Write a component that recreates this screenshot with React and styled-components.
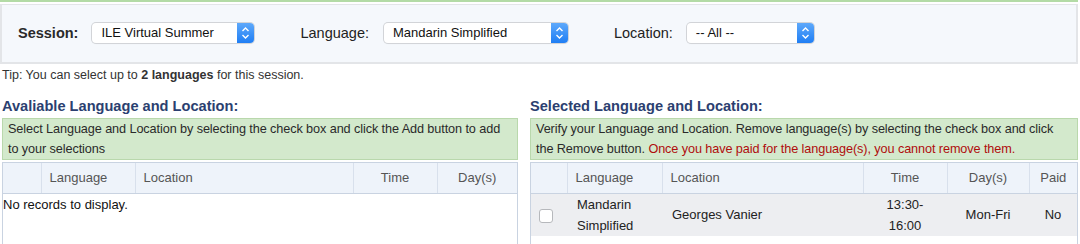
import React from "react";
import styled, { createGlobalStyle } from "styled-components";

const GlobalStyle = createGlobalStyle`
  html, body { margin: 0; padding: 0; background: #fff; }
  body { font-family: "Liberation Sans", Arial, Helvetica, sans-serif; color: #222; }
  * { box-sizing: border-box; }
`;

const Page = styled.div`
  width: 1080px;
  padding: 0 2px 0 0;
`;

const TopRule = styled.div`
  height: 2px;
  background: #b3dba6;
  margin-bottom: 2px;
`;

const FilterPanel = styled.div`
  height: 60px;
  border: 2px solid #e3e5e8;
  border-top-width: 1px;
  background: #f5f8fc;
  display: flex;
  align-items: center;
  padding: 0 0 2px 16px;
  gap: 46px;
`;

const Field = styled.div`
  display: flex;
  align-items: center;
  gap: ${(p) => p.$gap || 14}px;
`;

const Label = styled.label`
  font-size: 14.5px;
  font-weight: ${(p) => (p.$bold ? 700 : 400)};
  color: ${(p) => (p.$bold ? "#2a2a2a" : "#222")};
`;

const SelectBox = styled.div`
  display: flex;
  width: ${(p) => p.$w}px;
  height: 20px;
  border-radius: 4px;
  background: #fff;
  box-shadow: 0 0 0 1px #d2d4d8, 0 1px 1px rgba(0,0,0,0.08);
`;

const SelectText = styled.div`
  flex: 1;
  font-size: 13px;
  line-height: 20px;
  padding-left: 9px;
  color: #111;
  white-space: nowrap;
  overflow: hidden;
`;

const Arrow = styled.div`
  width: 17px;
  border-radius: 0 4px 4px 0;
  background: linear-gradient(#5ea9fb, #1f7ef4);
  display: flex;
  align-items: center;
  justify-content: center;
`;

const Tip = styled.p`
  margin: 0;
  padding: 4px 0 0 2px;
  font-size: 12.5px;
  line-height: 14px;
  color: #333;
  b { color: #333; }
`;

const Columns = styled.div`
  display: grid;
  grid-template-columns: 516px 548px;
  gap: 12px;
  padding: 16px 0 0 2px;
`;

const Section = styled.section`
  display: flex;
  flex-direction: column;
`;

const Heading = styled.h2`
  margin: 0 0 3px 0;
  font-size: 14.6px;
  line-height: 17px;
  font-weight: 700;
  color: #2c3f70;
`;

const Notice = styled.div`
  background: #d3e9cc;
  border: 1px solid #b9d8ac;
  padding: 0 5px;
  font-size: 12.7px;
  letter-spacing: -0.1px;
  line-height: 20px;
  color: #2a2a2a;
  height: 42px;
`;

const Warn = styled.span`
  color: #b00d0d;
`;

const TableWrap = styled.div`
  margin-top: 2px;
  border: 1px solid #c9d3e1;
  border-bottom: none;
  min-height: 120px;
  background: #fff;
`;

const Table = styled.table`
  width: 100%;
  border-collapse: collapse;
  table-layout: fixed;
  font-size: 13px;
`;

const Th = styled.th`
  height: 30px;
  background: #eef3fa;
  border-bottom: 1px solid #c9d3e1;
  border-left: 1px solid #d8e0ec;
  font-weight: 400;
  color: #555;
  text-align: ${(p) => p.$align || "left"};
  padding: 0 ${(p) => (p.$align === "center" ? 0 : 8)}px;
  &:first-child { border-left: none; }
`;

const Empty = styled.td`
  padding: 3px 0 0 0;
  font-size: 13px;
  color: #111;
  vertical-align: top;
`;

const Tr = styled.tr`
  background: ${(p) => (p.$shaded ? "#edeef1" : "#fff")};
`;

const Td = styled.td`
  height: 42px;
  padding: 0 ${(p) => (p.$align === "center" ? 0 : 10)}px;
  text-align: ${(p) => p.$align || "left"};
  color: #222;
  line-height: 21px;
  vertical-align: middle;
`;

const Check = styled.input.attrs({ type: "checkbox" })`
  appearance: none;
  width: 14px;
  height: 14px;
  margin: 3px 0 0 -2px;
  border: 1px solid #b6b8bc;
  border-radius: 3px;
  background: #fff;
  display: block;
`;

function Chevrons() {
  return (
    <svg width="9" height="14" viewBox="0 0 9 14">
      <path d="M1.5 5 L4.5 2 L7.5 5" fill="none" stroke="#fff" strokeWidth="1.4" />
      <path d="M1.5 9 L4.5 12 L7.5 9" fill="none" stroke="#fff" strokeWidth="1.4" />
    </svg>
  );
}

function Select({ width, value }) {
  return (
    <SelectBox $w={width}>
      <SelectText>{value}</SelectText>
      <Arrow>
        <Chevrons />
      </Arrow>
    </SelectBox>
  );
}

export default function App() {
  return (
    <Page>
      <GlobalStyle />
      <TopRule />
      <FilterPanel>
        <Field $gap={14}>
          <Label $bold>Session:</Label>
          <Select width={162} value="ILE Virtual Summer" />
        </Field>
        <Field $gap={15}>
          <Label>Language:</Label>
          <Select width={184} value="Mandarin Simplified" />
        </Field>
        <Field $gap={14}>
          <Label>Location:</Label>
          <Select width={127} value="-- All --" />
        </Field>
      </FilterPanel>
      <Tip>
        Tip: You can select up to <b>2 languages</b> for this session.
      </Tip>
      <Columns>
        <Section>
          <Heading>Avaliable Language and Location:</Heading>
          <Notice>
            Select Language and Location by selecting the check box and click the Add button to add to your selections
          </Notice>
          <TableWrap>
            <Table>
              <colgroup>
                <col style={{ width: 38 }} />
                <col style={{ width: 94 }} />
                <col style={{ width: 218 }} />
                <col style={{ width: 84 }} />
                <col />
              </colgroup>
              <thead>
                <tr>
                  <Th />
                  <Th>Language</Th>
                  <Th>Location</Th>
                  <Th $align="center">Time</Th>
                  <Th $align="center">Day(s)</Th>
                </tr>
              </thead>
              <tbody>
                <tr>
                  <Empty colSpan={5}>No records to display.</Empty>
                </tr>
              </tbody>
            </Table>
          </TableWrap>
        </Section>
        <Section>
          <Heading>Selected Language and Location:</Heading>
          <Notice>
            Verify your Language and Location. Remove language(s) by selecting the check box and click the Remove button.{" "}
            <Warn>Once you have paid for the language(s), you cannot remove them.</Warn>
          </Notice>
          <TableWrap>
            <Table>
              <colgroup>
                <col style={{ width: 36 }} />
                <col style={{ width: 95 }} />
                <col style={{ width: 201 }} />
                <col style={{ width: 84 }} />
                <col style={{ width: 82 }} />
                <col />
              </colgroup>
              <thead>
                <tr>
                  <Th />
                  <Th>Language</Th>
                  <Th>Location</Th>
                  <Th $align="center">Time</Th>
                  <Th $align="center">Day(s)</Th>
                  <Th $align="center">Paid</Th>
                </tr>
              </thead>
              <tbody>
                <Tr $shaded>
                  <Td>
                    <Check />
                  </Td>
                  <Td>Mandarin<br />Simplified</Td>
                  <Td>Georges Vanier</Td>
                  <Td $align="center">13:30-<br />16:00</Td>
                  <Td $align="center">Mon-Fri</Td>
                  <Td $align="center">No</Td>
                </Tr>
              </tbody>
            </Table>
          </TableWrap>
        </Section>
      </Columns>
    </Page>
  );
}
